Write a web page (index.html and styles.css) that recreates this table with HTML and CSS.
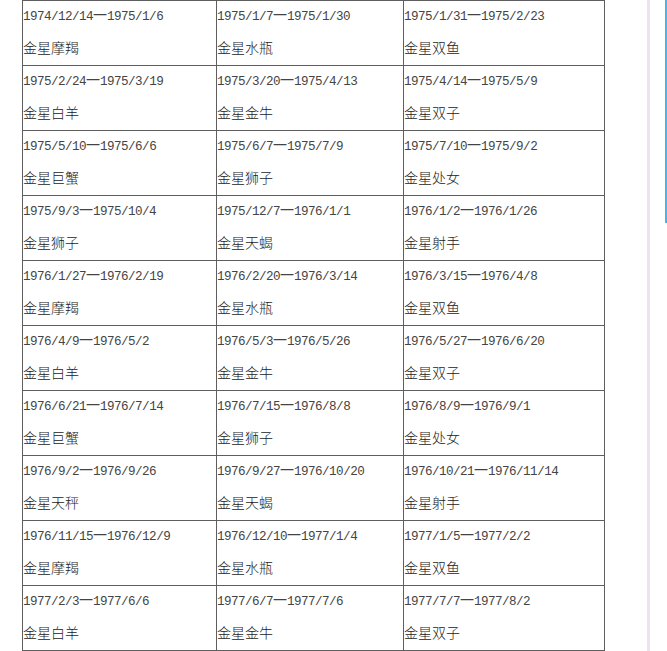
FILE: index.html
```html
<!DOCTYPE html>
<html lang="zh">
<head>
<meta charset="utf-8">
<title>金星星座表</title>
<link rel="stylesheet" href="styles.css">
</head>
<body>
<div class="page">
  <table class="venus">
    <colgroup><col class="c1"><col class="c2"><col class="c3"></colgroup>
    <tbody>
      <tr><td><p class="d">1974/12/14<span class="dash">一</span>1975/1/6</p><p class="n">金星摩羯</p></td><td><p class="d">1975/1/7<span class="dash">一</span>1975/1/30</p><p class="n">金星水瓶</p></td><td><p class="d">1975/1/31<span class="dash">一</span>1975/2/23</p><p class="n">金星双鱼</p></td></tr>
      <tr><td><p class="d">1975/2/24<span class="dash">一</span>1975/3/19</p><p class="n">金星白羊</p></td><td><p class="d">1975/3/20<span class="dash">一</span>1975/4/13</p><p class="n">金星金牛</p></td><td><p class="d">1975/4/14<span class="dash">一</span>1975/5/9</p><p class="n">金星双子</p></td></tr>
      <tr><td><p class="d">1975/5/10<span class="dash">一</span>1975/6/6</p><p class="n">金星巨蟹</p></td><td><p class="d">1975/6/7<span class="dash">一</span>1975/7/9</p><p class="n">金星狮子</p></td><td><p class="d">1975/7/10<span class="dash">一</span>1975/9/2</p><p class="n">金星处女</p></td></tr>
      <tr><td><p class="d">1975/9/3<span class="dash">一</span>1975/10/4</p><p class="n">金星狮子</p></td><td><p class="d">1975/12/7<span class="dash">一</span>1976/1/1</p><p class="n">金星天蝎</p></td><td><p class="d">1976/1/2<span class="dash">一</span>1976/1/26</p><p class="n">金星射手</p></td></tr>
      <tr><td><p class="d">1976/1/27<span class="dash">一</span>1976/2/19</p><p class="n">金星摩羯</p></td><td><p class="d">1976/2/20<span class="dash">一</span>1976/3/14</p><p class="n">金星水瓶</p></td><td><p class="d">1976/3/15<span class="dash">一</span>1976/4/8</p><p class="n">金星双鱼</p></td></tr>
      <tr><td><p class="d">1976/4/9<span class="dash">一</span>1976/5/2</p><p class="n">金星白羊</p></td><td><p class="d">1976/5/3<span class="dash">一</span>1976/5/26</p><p class="n">金星金牛</p></td><td><p class="d">1976/5/27<span class="dash">一</span>1976/6/20</p><p class="n">金星双子</p></td></tr>
      <tr><td><p class="d">1976/6/21<span class="dash">一</span>1976/7/14</p><p class="n">金星巨蟹</p></td><td><p class="d">1976/7/15<span class="dash">一</span>1976/8/8</p><p class="n">金星狮子</p></td><td><p class="d">1976/8/9<span class="dash">一</span>1976/9/1</p><p class="n">金星处女</p></td></tr>
      <tr><td><p class="d">1976/9/2<span class="dash">一</span>1976/9/26</p><p class="n">金星天秤</p></td><td><p class="d">1976/9/27<span class="dash">一</span>1976/10/20</p><p class="n">金星天蝎</p></td><td><p class="d">1976/10/21<span class="dash">一</span>1976/11/14</p><p class="n">金星射手</p></td></tr>
      <tr><td><p class="d">1976/11/15<span class="dash">一</span>1976/12/9</p><p class="n">金星摩羯</p></td><td><p class="d">1976/12/10<span class="dash">一</span>1977/1/4</p><p class="n">金星水瓶</p></td><td><p class="d">1977/1/5<span class="dash">一</span>1977/2/2</p><p class="n">金星双鱼</p></td></tr>
      <tr><td><p class="d">1977/2/3<span class="dash">一</span>1977/6/6</p><p class="n">金星白羊</p></td><td><p class="d">1977/6/7<span class="dash">一</span>1977/7/6</p><p class="n">金星金牛</p></td><td><p class="d">1977/7/7<span class="dash">一</span>1977/8/2</p><p class="n">金星双子</p></td></tr>
    </tbody>
  </table>
  <div class="rail-pink"></div>
  <div class="rail-blue"></div>
</div>
</body>
</html>
```

FILE: styles.css
```css
html, body {
  margin: 0;
  padding: 0;
  background: #fff;
}
.page {
  display: flex;
  align-items: flex-start;
  width: 667px;
  height: 651px;
  overflow: hidden;
}
.venus {
  margin-left: 22px;
  border-collapse: collapse;
  table-layout: fixed;
  width: 582px;
  flex: none;
  color: #333;
}
.c1 { width: 194px; }
.c2 { width: 187px; }
.c3 { width: 201px; }
.venus td {
  border: 1px solid #5e5e5e;
  padding: 0;
  vertical-align: top;
  white-space: nowrap;
  overflow: hidden;
}
.venus p {
  margin: 0;
}
.d {
  height: 27px;
  line-height: 26px;
  font-family: "Liberation Mono", "DejaVu Sans Mono", monospace;
  font-size: 12.6px;
  letter-spacing: -0.55px;
  color: #444;
}
.dash {
  font-family: "Noto Sans CJK SC", sans-serif;
  font-size: 14px;
  letter-spacing: 0;
  color: #444;
}
.n {
  height: 37px;
  line-height: 38px;
  font-family: "Noto Sans CJK SC", "Noto Sans CJK JP", sans-serif;
  font-size: 14px;
  font-weight: 300;
  color: #222;
}
.rail-pink {
  flex: none;
  margin-left: 42px;
  width: 3px;
  height: 651px;
  background: #f1e0f4;
}
.rail-blue {
  flex: none;
  margin-left: 15px;
  width: 3px;
  height: 223px;
  background: #3db7f6;
}
```
